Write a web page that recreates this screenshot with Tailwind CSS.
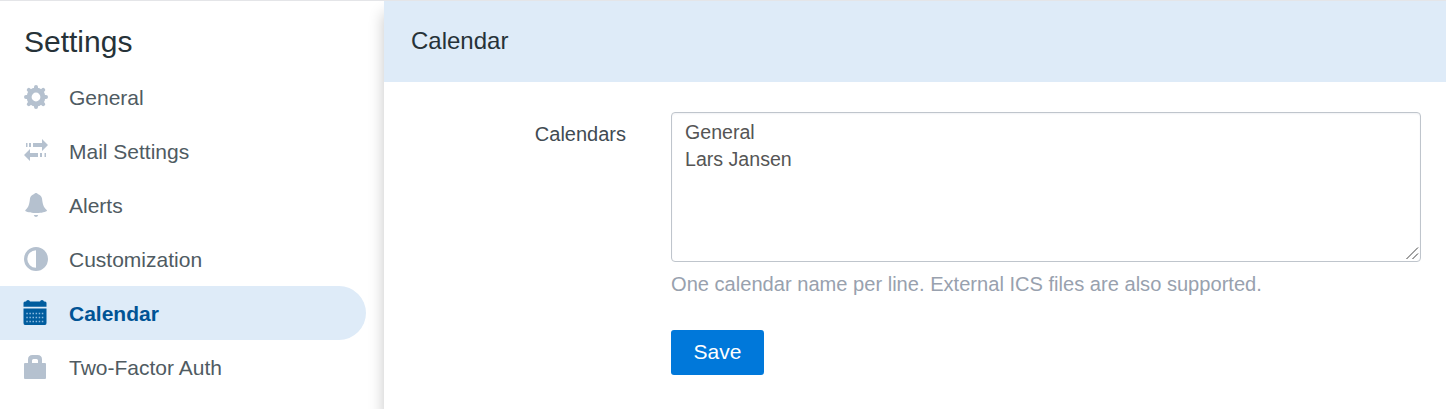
<!DOCTYPE html>
<html lang="en">
<head>
<meta charset="utf-8">
<title>Settings</title>
<script src="https://cdn.jsdelivr.net/npm/@tailwindcss/browser@4"></script>
</head>
<body class="h-[409px] overflow-hidden bg-white font-['Liberation_Sans',Arial,sans-serif]">
<div class="flex h-full overflow-hidden border-t border-[#e4e5e8]">
  <aside class="w-[384px] shrink-0 overflow-hidden pt-[17px]">
    <h1 class="h-[52px] pl-6 text-[30px] leading-[48px] text-[#263238]">Settings</h1>
    <nav class="text-[21px] text-[#4f5b62]">
      <a class="flex h-[54px] w-[366px] items-center gap-[21px] pt-0.5 pl-6">
        <svg class="mb-0.5 size-6 shrink-0" viewBox="0 0 24 24" fill="none" stroke="#b5c1cf"><circle cx="12" cy="12" r="6.900" stroke-width="5"/><path d="M12 2v2M12 20v2M2 12h2M20 12h2M4.800 4.800l1.500 1.500M17.700 17.700l1.500 1.500M4.800 19.200l1.500-1.500M17.700 6.300l1.500-1.500" stroke-width="4" stroke-linecap="round"/></svg>
        <span>General</span>
      </a>
      <a class="flex h-[54px] w-[366px] items-center gap-[21px] pt-0.5 pl-6">
        <svg class="mb-0.5 size-6 shrink-0" viewBox="0 0 24 24" fill="#b5c1cf"><path d="M2 4h1.500v4H2zM5 4h2v4H5zM9 4h9V0L24 6l-6 6V8H9zM0 16l6-6v4h8v4H6v4zM16 14h2v4h-2zM20.500 14H22v4h-1.500z"/></svg>
        <span>Mail Settings</span>
      </a>
      <a class="flex h-[54px] w-[366px] items-center gap-[21px] pt-0.5 pl-6">
        <svg class="mb-0.5 size-6 shrink-0" viewBox="0 0 24 24" fill="#b5c1cf"><path d="M10.300 1Q10.500 0 12 0t1.700 1q3.600 1 4.300 4.500c.6 4.500 1 8.300 4.700 11.500q.3.300.2.900C20.500 19.500 15 20 12 20S3.500 19.500 1.300 17.900q-.1-.6.2-.9C5.100 13.800 5.400 10 6 5.500 6.700 2 10.300 1 10.300 1zM9.800 22h4.400q-.6 2-2.200 2t-2.200-2z"/></svg>
        <span>Alerts</span>
      </a>
      <a class="flex h-[54px] w-[366px] items-center gap-[21px] pt-0.5 pl-6">
        <svg class="mb-0.5 size-6 shrink-0" viewBox="0 0 24 24" fill="#b5c1cf"><path fill-rule="evenodd" d="M12 0a12 12 0 1 0 0 24 12 12 0 0 0 0-24zm0 3.300v17.400a8.700 8.700 0 0 1 0-17.400z"/></svg>
        <span>Customization</span>
      </a>
      <a class="flex h-[54px] w-[366px] items-center gap-[21px] rounded-r-[27px] bg-[#deebf8] pt-0.5 pl-6 font-bold text-[#005395]">
        <svg class="mr-px mb-[3px] -ml-px h-[25px] w-6 shrink-0" viewBox="0 0 24 25" fill="#005c9e"><path d="M.5 6.800V3q0-1.500 1.500-1.500h1Q3.300 0 5 0t2 1.500h10Q17.300 0 19 0t2 1.500h1q1.500 0 1.500 1.500v3.800zM.5 8.600h23V23q0 2-1.500 2H2q-1.500 0-1.500-2z"/><path d="M3.300 13.500h17.200M3.300 17.500h17.200M3.300 21.500h17.200" fill="none" stroke="#8dbbe0" stroke-width="1.500" stroke-dasharray="1.500 1.600"/></svg>
        <span>Calendar</span>
      </a>
      <a class="flex h-[54px] w-[366px] items-center gap-[21px] pt-0.5 pl-6">
        <svg class="mb-0.5 size-6 shrink-0" viewBox="0 0 24 24" fill="#b5c1cf"><path fill-rule="evenodd" d="M4 8V4.500Q4 0 8.500 0h5Q18 0 18 4.500V8h3q1 0 1 1v14q0 1-1 1H1q-1 0-1-1V9q0-1 1-1zm4 0h6V5.500Q14 4 12.500 4h-3Q8 4 8 5.500z"/></svg>
        <span>Two-Factor Auth</span>
      </a>
    </nav>
  </aside>
  <main class="flex-1 bg-white shadow-[-1px_12px_14px_rgba(0,0,0,0.2)]">
    <header class="h-[81px] bg-[#deebf8] pl-[27px] text-2xl leading-[80px] text-[#263238]">Calendar</header>
    <form class="flex pt-[30px] text-[20px]">
      <label class="w-[287px] shrink-0 pr-[45px] text-right leading-[44px] text-[#414b52]">Calendars</label>
      <div class="flex w-[750px] flex-col items-start">
        <div class="relative w-full">
          <textarea class="block h-[150px] w-full resize-none rounded-[4px] border border-[#bfc5cc] px-[13px] py-[6px] text-[19.6px] leading-[27px] text-[#555] shadow-[inset_0_1px_2px_rgba(0,30,80,0.06)] outline-none">General
Lars Jansen</textarea>
          <svg class="pointer-events-none absolute right-[2px] bottom-[2px] size-[14px]" viewBox="0 0 14 14" fill="none" stroke="#444"><path d="M1.500 13l11.500-11.500M7.500 13l5.500-5.500"/></svg>
        </div>
        <p class="mt-[7px] text-[20.1px] leading-[30px] text-[#98a1ae]">One calendar name per line. External ICS files are also supported.</p>
        <button type="button" class="mt-[31px] h-[45px] w-[93px] rounded-[3px] bg-[#0078da] pb-0.5 text-[21px] leading-[43px] text-white">Save</button>
      </div>
    </form>
  </main>
</div>
</body>
</html>
